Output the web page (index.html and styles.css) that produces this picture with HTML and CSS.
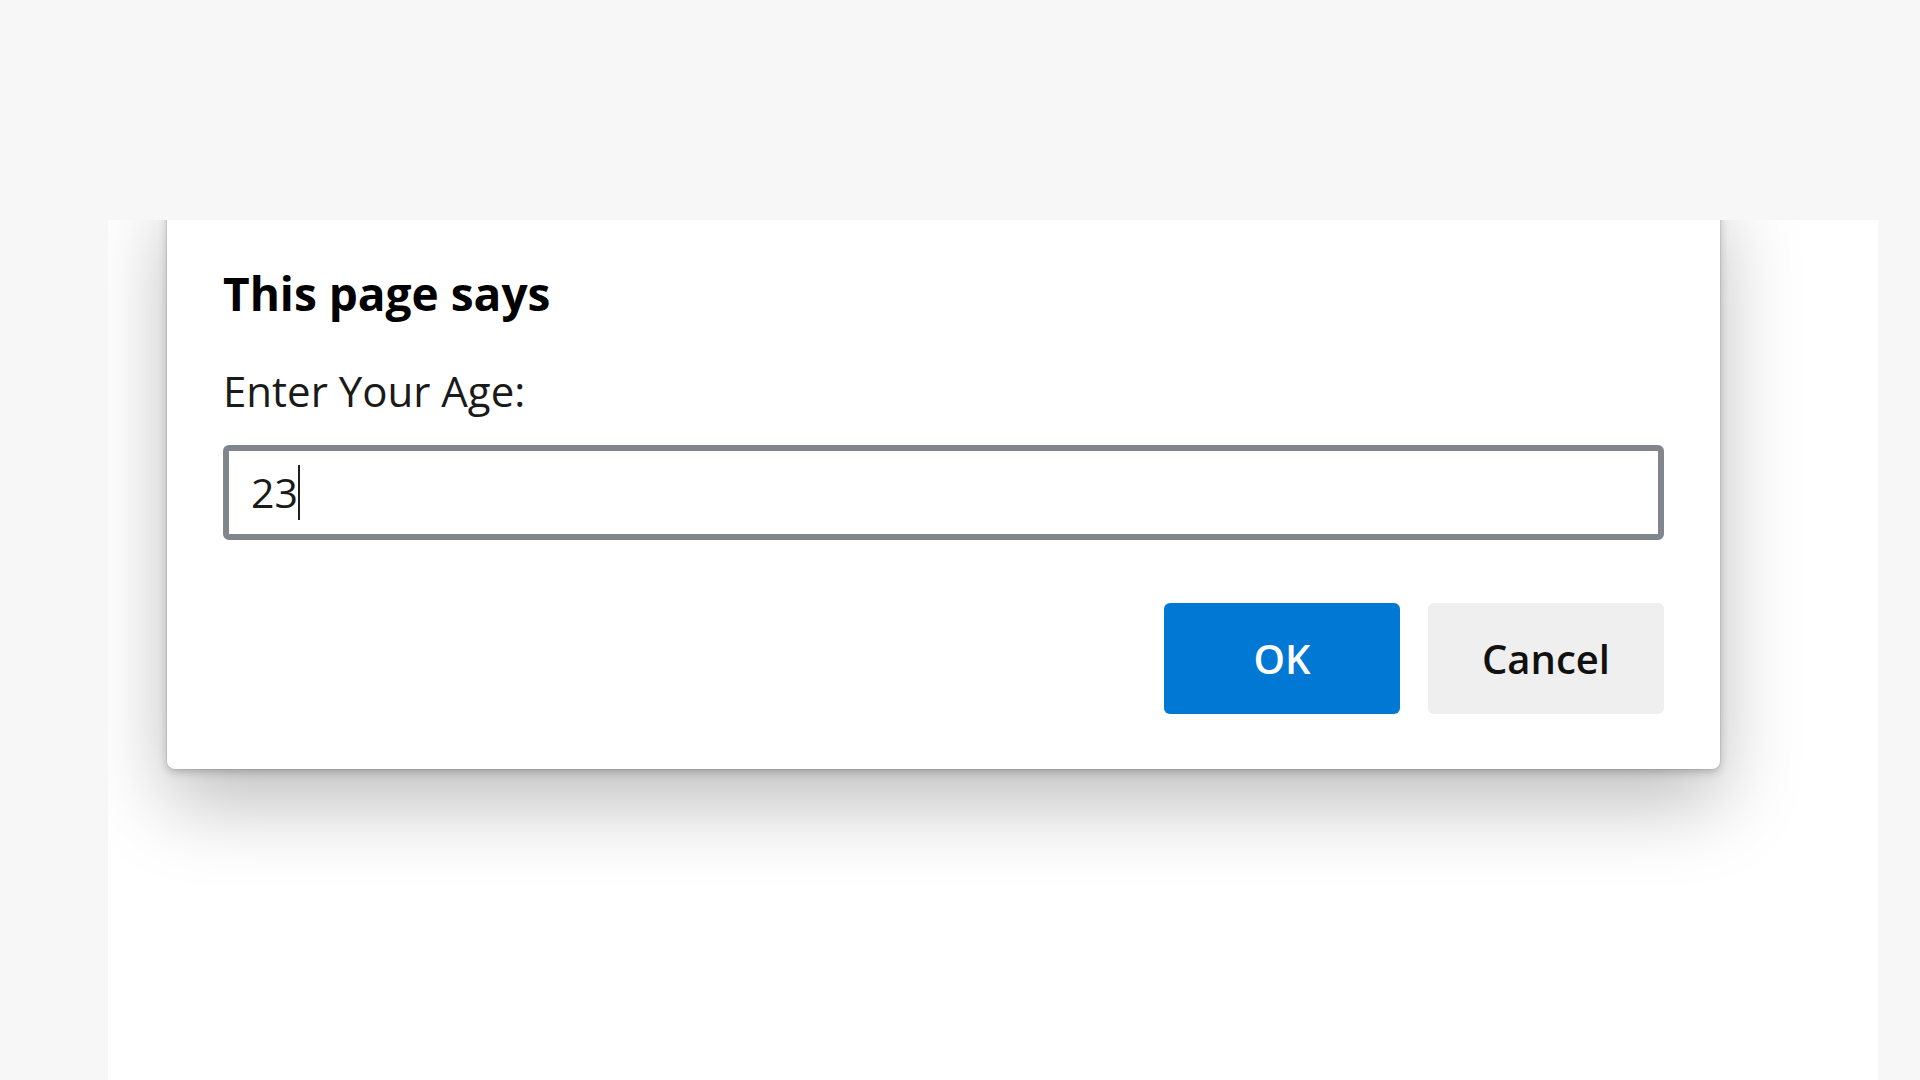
FILE: index.html
```html
<!DOCTYPE html>
<html lang="en">
<head>
<meta charset="utf-8">
<title>This page says</title>
<link rel="stylesheet" href="styles.css">
</head>
<body>
  <div class="page">
    <div class="dialog">
      <h1 class="dialog-title">This page says</h1>
      <p class="dialog-message">Enter Your Age:</p>
      <div class="dialog-input"><span class="input-value">23</span><span class="caret"></span></div>
      <div class="dialog-actions">
        <button class="btn btn-primary">OK</button>
        <button class="btn btn-secondary">Cancel</button>
      </div>
    </div>
  </div>
</body>
</html>
```

FILE: styles.css
```css
html, body {
  margin: 0;
  padding: 0;
  background: #f7f7f7;
  width: 1920px;
  height: 1080px;
  overflow: hidden;
  font-family: "Open Sans", "Noto Sans", "Liberation Sans", sans-serif;
  color: #111;
}

.page {
  margin: 220px 0 0 108px;
  width: 1770px;
  height: 860px;
  background: #ffffff;
  overflow: hidden;
}

.dialog {
  margin: -40px 0 0 59px;
  width: 1553px;
  box-sizing: border-box;
  padding: 83px 56px 55px 56px;
  background: #ffffff;
  border-radius: 8px;
  box-shadow: 0 0 0 1px rgba(0,0,0,0.06), 0 3px 8px rgba(0,0,0,0.22), 0 34px 80px rgba(0,0,0,0.26);
}

.dialog-title {
  margin: 0;
  font-size: 46px;
  line-height: 60px;
  font-weight: 700;
  color: #000;
}

.dialog-message {
  margin: 42px 0 0 0;
  font-size: 42px;
  line-height: 52px;
  font-weight: 400;
  color: #1a1a1a;
}

.dialog-input {
  margin-top: 28px;
  height: 95px;
  box-sizing: border-box;
  border: 6px solid #80868b;
  border-radius: 6px;
  padding-left: 22px;
  display: flex;
  align-items: center;
  font-size: 41px;
  color: #1a1a1a;
}

.input-value {
  line-height: 1;
}

.caret {
  display: inline-block;
  width: 2px;
  height: 55px;
  background: #202020;
}

.dialog-actions {
  margin-top: 63px;
  display: flex;
  justify-content: flex-end;
  gap: 28px;
}

.btn {
  width: 236px;
  height: 111px;
  border: none;
  border-radius: 6px;
  font-family: "Open Sans", "Noto Sans", "Liberation Sans", sans-serif;
  font-size: 40px;
  font-weight: 600;
  padding: 0;
  cursor: pointer;
}

.btn-primary {
  background: #0078d4;
  color: #ffffff;
}

.btn-secondary {
  background: #efefef;
  color: #111;
}
```
